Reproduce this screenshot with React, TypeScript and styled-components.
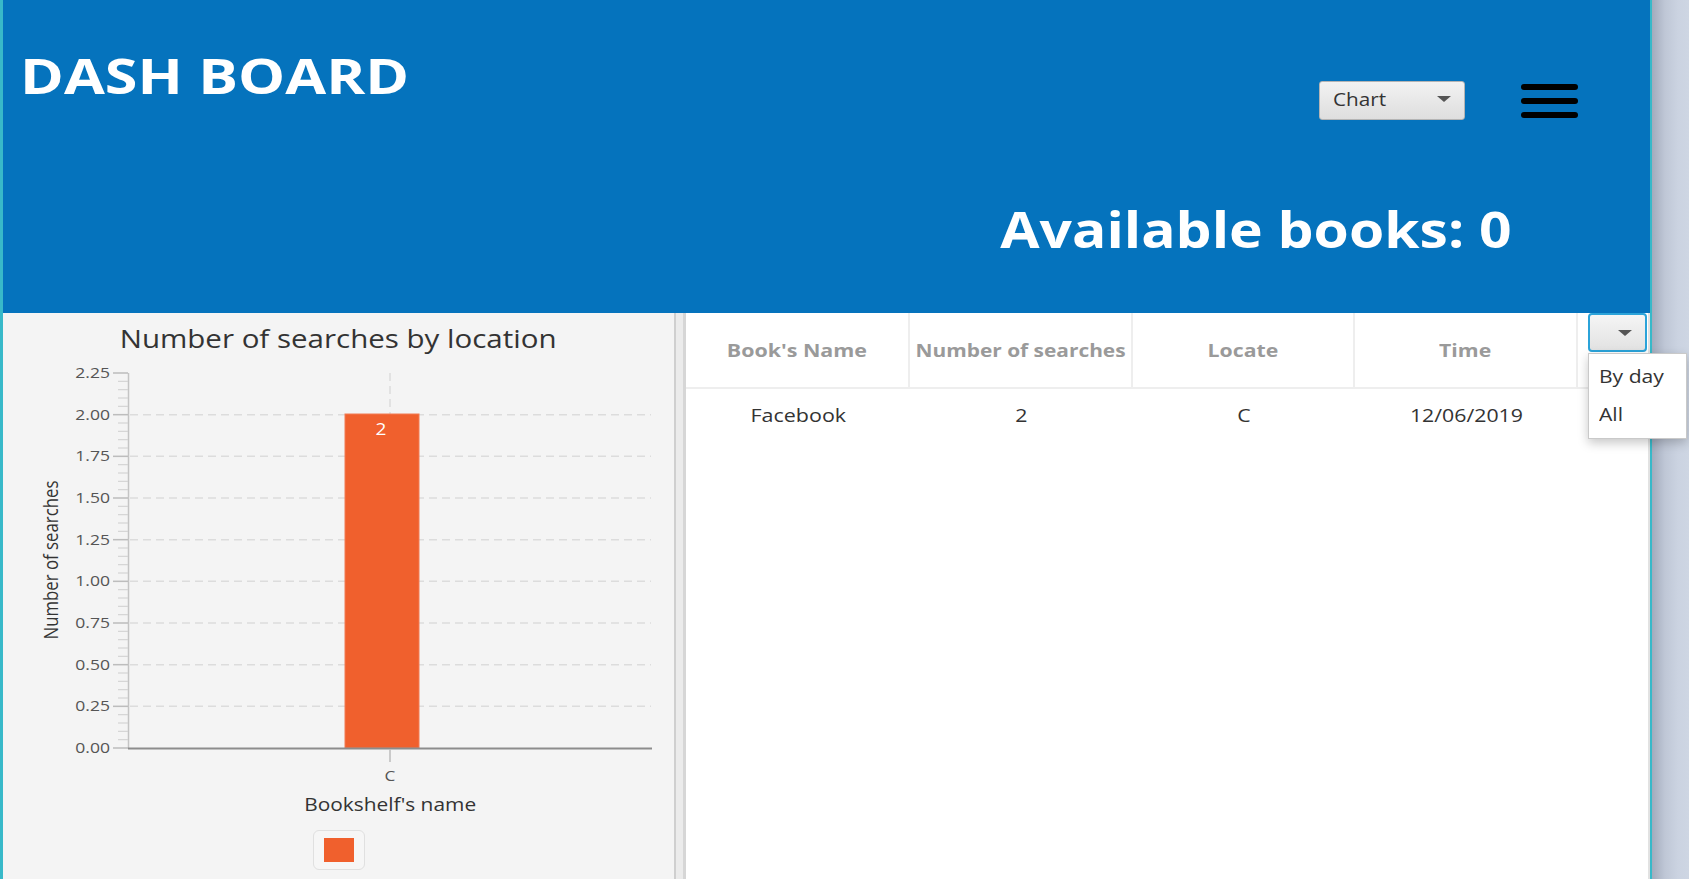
import React from "react";
import styled, { createGlobalStyle } from "styled-components";

const Global = createGlobalStyle`
  html, body { margin: 0; padding: 0; overflow: hidden; }
  body { font-family: "Open Sans", "Noto Sans", sans-serif; background: #c9d1df; }
  * { box-sizing: border-box; }
`;

const Desktop = styled.div`
  display: flex;
  width: 1689px;
  height: 879px;
  overflow: hidden;
`;

const Window = styled.div`
  width: 1652px;
  height: 879px;
  display: flex;
  flex-direction: column;
  border-left: 3px solid #38b9c9;
  border-right: 2px solid #38b9c9;
  background: #ffffff;
`;

const DesktopStrip = styled.div`
  flex: 1;
  background: linear-gradient(to right, #a3abbc 0%, #bfc7d6 35%, #cbd3e1 70%, #ced6e3 100%);
`;

/* The original was rendered in a wide UI face; this widens Open Sans to match. */
const Stretch = styled.span<{ $x: number; $origin?: string }>`
  display: inline-block;
  white-space: nowrap;
  transform: scaleX(${(p) => p.$x});
  transform-origin: ${(p) => p.$origin ?? "center"};
`;

const Header = styled.header`
  height: 313px;
  background: #0573bd;
  display: flex;
  flex-direction: column;
`;

const TopRow = styled.div`
  display: flex;
  justify-content: space-between;
  align-items: flex-start;
`;

const Title = styled.h1`
  margin: 51px 0 0 17px;
  font-size: 49px;
  line-height: 49px;
  font-weight: 700;
  color: #ffffff;
`;

const Controls = styled.div`
  display: flex;
  align-items: center;
  gap: 56px;
  margin: 81px 72px 0 0;
`;

const SelectButton = styled.div`
  width: 146px;
  height: 39px;
  display: flex;
  align-items: center;
  justify-content: space-between;
  padding: 0 13px 3px 13px;
  border: 1px solid #b4b4b4;
  border-radius: 3px;
  background: linear-gradient(#f2f2f2, #dedede);
  font-size: 19px;
  color: #333333;
`;

const Arrow = styled.span`
  width: 0;
  height: 0;
  border-left: 7px solid transparent;
  border-right: 7px solid transparent;
  border-top: 6px solid #555555;
`;

const Burger = styled.div`
  display: flex;
  flex-direction: column;
  gap: 8px;
  width: 57px;
`;

const BurgerBar = styled.span`
  display: block;
  height: 6px;
  border-radius: 3px;
  background: #000000;
`;

const CountRow = styled.div`
  display: flex;
  justify-content: flex-end;
  padding-right: 138px;
  margin-top: 84px;
`;

const Count = styled.div`
  font-size: 50px;
  line-height: 50px;
  font-weight: 700;
  color: #ffffff;
`;

const Content = styled.main`
  flex: 1;
  display: flex;
  min-height: 0;
`;

const ChartPanel = styled.section`
  width: 671px;
  background: #f4f4f4;
  display: flex;
  flex-direction: column;
`;

const ChartTitle = styled.div`
  padding-top: 13px;
  font-size: 25px;
  line-height: 25px;
  text-align: center;
  color: #333333;
`;

const PlotSvg = styled.svg`
  display: block;
  width: 671px;
  height: 439px;
  font-family: "Open Sans", "Noto Sans", sans-serif;
`;

const XAxisLabel = styled.div`
  margin: 5px 0 0 125px;
  width: 524px;
  text-align: center;
  font-size: 19px;
  line-height: 19px;
  color: #333333;
`;

const Legend = styled.div`
  align-self: center;
  margin-top: 16px;
  width: 52px;
  height: 40px;
  border: 1px solid #e0e0e0;
  border-radius: 6px;
  background: #f6f6f6;
  display: flex;
  align-items: center;
  justify-content: center;
`;

const LegendSwatch = styled.span`
  width: 30px;
  height: 24px;
  background: #f0602d;
`;

const Splitter = styled.div`
  width: 12px;
  border-left: 2px solid #cfcfcf;
  border-right: 3px solid #d6d6d6;
  background: #ebebeb;
`;

const TablePanel = styled.section`
  flex: 1;
  background: #ffffff;
  border-right: 2px solid #e2e2e2;
  display: grid;
  grid-template-columns: 224px 223px 222px 223px 1fr;
  grid-template-rows: 76px 52px;
  align-content: start;
`;

const HeadCell = styled.div`
  display: flex;
  align-items: center;
  justify-content: center;
  border-right: 2px solid #eeeeee;
  border-bottom: 2px solid #eeeeee;
  font-size: 18px;
  font-weight: 700;
  color: #9a9a9a;
  white-space: nowrap;
`;

const MenuCell = styled.div`
  position: relative;
  border-bottom: 2px solid #eeeeee;
  padding-left: 10px;
`;

const MenuButton = styled.div`
  width: 59px;
  height: 39px;
  border: 2px solid #2ba3d9;
  border-radius: 4px;
  background: linear-gradient(#f5f5f5, #e2e2e2);
  display: flex;
  align-items: center;
  justify-content: flex-end;
  padding-right: 13px;
`;

const Popup = styled.ul`
  position: absolute;
  top: 40px;
  left: 10px;
  width: 99px;
  margin: 0;
  padding: 3px 0 5px;
  list-style: none;
  background: #ffffff;
  border: 1px solid #c9c9c9;
  box-shadow: 0 4px 10px rgba(0, 0, 0, 0.22);
  z-index: 5;
`;

const PopupItem = styled.li`
  height: 38px;
  display: flex;
  align-items: center;
  padding-left: 10px;
  font-size: 19px;
  color: #333333;
`;

const Cell = styled.div`
  display: flex;
  align-items: center;
  justify-content: center;
  font-size: 19px;
  color: #333333;
`;

const OX = 3;
const OY = 351;
const px = (x: number) => x - OX;
const py = (y: number) => y - OY;
const yFor = (v: number) => 748 - v * (375 / 2.25);

const majors = [0, 0.25, 0.5, 0.75, 1, 1.25, 1.5, 1.75, 2, 2.25];

function Plot() {
  const minors: number[] = [];
  for (let i = 0; i < 9; i++) {
    for (let k = 1; k < 5; k++) minors.push(i * 0.25 + k * 0.05);
  }
  return (
    <PlotSvg viewBox="0 0 671 439">
      {majors.slice(1, 9).map((v) => (
        <line key={"g" + v} x1={px(130)} x2={px(651)} y1={py(yFor(v))} y2={py(yFor(v))} stroke="#dcdcdc" strokeWidth={1.5} strokeDasharray="8 5" />
      ))}
      <line x1={px(390)} x2={px(390)} y1={py(373)} y2={py(748)} stroke="#dcdcdc" strokeWidth={1.5} strokeDasharray="8 5" />
      <line x1={px(128.5)} x2={px(128.5)} y1={py(373)} y2={py(749)} stroke="#c4c4c4" strokeWidth={1.5} />
      {majors.map((v) => (
        <g key={"t" + v}>
          <line x1={px(113)} x2={px(128)} y1={py(yFor(v))} y2={py(yFor(v))} stroke="#bdbdbd" strokeWidth={1.5} />
          <text transform={`translate(${px(110)} ${py(yFor(v)) + 5}) scale(1.17 1)`} fontSize={15} fill="#555555" textAnchor="end">
            {v.toFixed(2)}
          </text>
        </g>
      ))}
      {minors.map((v) => (
        <line key={"m" + v} x1={px(118)} x2={px(128)} y1={py(yFor(v))} y2={py(yFor(v))} stroke="#d4d4d4" strokeWidth={1.2} />
      ))}
      <text transform={`translate(${px(51)} ${py(560)}) rotate(-90) scale(1 1.15)`} fontSize={16.8} fill="#333333" textAnchor="middle" dominantBaseline="central">
        Number of searches
      </text>
      <rect x={px(345)} y={py(414)} width={74} height={334} fill="#f0602d" stroke="#f27a52" strokeWidth={1} />
      <text transform={`translate(${px(381)} ${py(435)}) scale(1.12 1)`} fontSize={17} fill="#ffffff" textAnchor="middle">2</text>
      <line x1={px(128)} x2={px(652)} y1={py(748.5)} y2={py(748.5)} stroke="#8c8c8c" strokeWidth={2} />
      <line x1={px(390)} x2={px(390)} y1={py(749)} y2={py(762)} stroke="#bdbdbd" strokeWidth={1.5} />
      <text transform={`translate(${px(390)} ${py(781)}) scale(1.15 1)`} fontSize={15} fill="#555555" textAnchor="middle">C</text>
    </PlotSvg>
  );
}

export default function App() {
  return (
    <>
      <Global />
      <Desktop>
        <Window>
          <Header>
            <TopRow>
              <Title>
                <Stretch $x={1.21} $origin="left">DASH BOARD</Stretch>
              </Title>
              <Controls>
                <SelectButton>
                  <Stretch $x={1.09} $origin="left">Chart</Stretch>
                  <Arrow />
                </SelectButton>
                <Burger>
                  <BurgerBar />
                  <BurgerBar />
                  <BurgerBar />
                </Burger>
              </Controls>
            </TopRow>
            <CountRow>
              <Count>
                <Stretch $x={1.14} $origin="right">Available books: 0</Stretch>
              </Count>
            </CountRow>
          </Header>
          <Content>
            <ChartPanel>
              <ChartTitle>
                <Stretch $x={1.18}>Number of searches by location</Stretch>
              </ChartTitle>
              <Plot />
              <XAxisLabel>
                <Stretch $x={1.1}>Bookshelf's name</Stretch>
              </XAxisLabel>
              <Legend>
                <LegendSwatch />
              </Legend>
            </ChartPanel>
            <Splitter />
            <TablePanel>
              <HeadCell><Stretch $x={1.19}>Book's Name</Stretch></HeadCell>
              <HeadCell><Stretch $x={1.16}>Number of searches</Stretch></HeadCell>
              <HeadCell><Stretch $x={1.18}>Locate</Stretch></HeadCell>
              <HeadCell><Stretch $x={1.18}>Time</Stretch></HeadCell>
              <MenuCell>
                <MenuButton>
                  <Arrow />
                </MenuButton>
                <Popup>
                  <PopupItem><Stretch $x={1.11} $origin="left">By day</Stretch></PopupItem>
                  <PopupItem><Stretch $x={1.11} $origin="left">All</Stretch></PopupItem>
                </Popup>
              </MenuCell>
              <Cell><Stretch $x={1.13}>Facebook</Stretch></Cell>
              <Cell><Stretch $x={1.12}>2</Stretch></Cell>
              <Cell><Stretch $x={1.12}>C</Stretch></Cell>
              <Cell><Stretch $x={1.12}>12/06/2019</Stretch></Cell>
              <Cell />
            </TablePanel>
          </Content>
        </Window>
        <DesktopStrip />
      </Desktop>
    </>
  );
}
